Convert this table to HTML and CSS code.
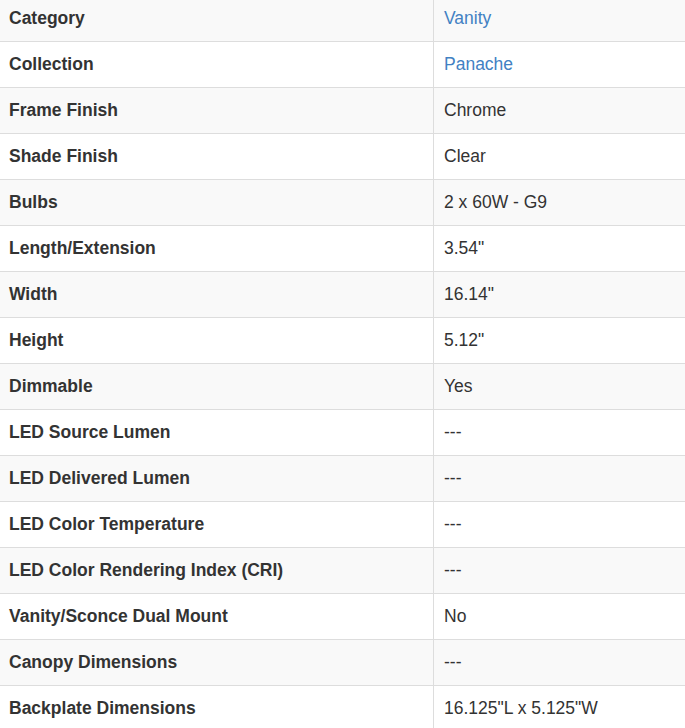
FILE: index.html
```html
<!DOCTYPE html>
<html>
<head>
<meta charset="utf-8">
<link rel="stylesheet" href="styles.css">
</head>
<body>
<table class="specs">
<tbody>
<tr><th>Category</th><td><a href="#">Vanity</a></td></tr>
<tr><th>Collection</th><td><a href="#">Panache</a></td></tr>
<tr><th>Frame Finish</th><td>Chrome</td></tr>
<tr><th>Shade Finish</th><td>Clear</td></tr>
<tr><th>Bulbs</th><td>2 x 60W - G9</td></tr>
<tr><th>Length/Extension</th><td>3.54"</td></tr>
<tr><th>Width</th><td>16.14"</td></tr>
<tr><th>Height</th><td>5.12"</td></tr>
<tr><th>Dimmable</th><td>Yes</td></tr>
<tr><th>LED Source Lumen</th><td>---</td></tr>
<tr><th>LED Delivered Lumen</th><td>---</td></tr>
<tr><th>LED Color Temperature</th><td>---</td></tr>
<tr><th>LED Color Rendering Index (CRI)</th><td>---</td></tr>
<tr><th>Vanity/Sconce Dual Mount</th><td>No</td></tr>
<tr><th>Canopy Dimensions</th><td>---</td></tr>
<tr><th>Backplate Dimensions</th><td>16.125"L x 5.125"W</td></tr>
</tbody>
</table>
</body>
</html>
```
FILE: styles.css
```css
html, body {
  margin: 0;
  padding: 0;
  background: #fff;
}
body {
  font-family: "Liberation Sans", Arial, sans-serif;
  font-size: 17.5px;
  color: #333;
  overflow: hidden;
}
.specs {
  width: 685px;
  border-collapse: collapse;
  margin-top: -5px;
  table-layout: fixed;
}
.specs th,
.specs td {
  height: 25px;
  line-height: 25px;
  padding: 10px 9px 10px 9px;
  border-top: 1px solid #ddd;
  text-align: left;
  vertical-align: middle;
  white-space: nowrap;
}
.specs th {
  width: 415px;
  font-weight: bold;
}
.specs td {
  border-left: 1px solid #ddd;
  padding-left: 10px;
  font-weight: normal;
}
.specs tr:nth-child(odd) {
  background: #f9f9f9;
}
.specs a {
  color: #4281c3;
  text-decoration: none;
}
```
